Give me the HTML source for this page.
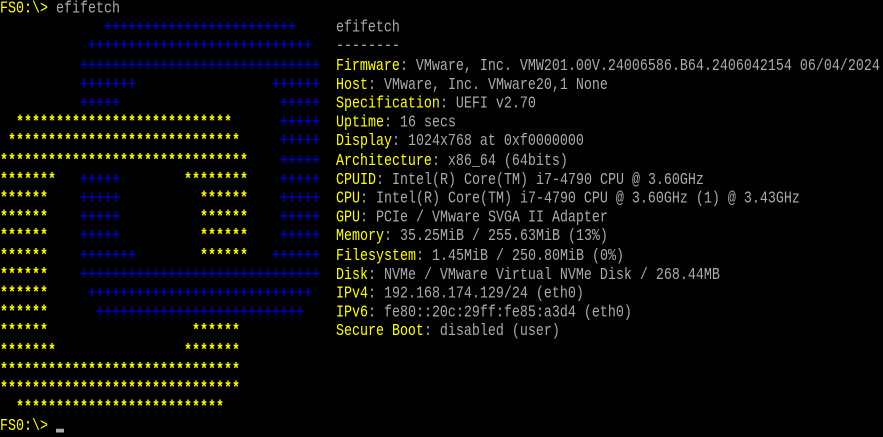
<!DOCTYPE html>
<html><head><meta charset="utf-8"><style>
html,body{margin:0;padding:0;background:#000;width:883px;height:437px;overflow:hidden}
pre{margin:0;font-family:"Liberation Mono",monospace;font-size:13.333px;line-height:15.2px;color:#aaa;transform:scaleY(1.25);transform-origin:0 0;white-space:pre}
.y{color:#ffff00}.b{color:#0000b0;font-weight:bold}
.a{font-weight:bold}
.cur{display:inline-block;width:8px;height:3px;background:#aaa;vertical-align:-2px}
</style></head><body><pre><span class="y">FS0:\&gt;</span> efifetch
             <span class="b">++++++++++++++++++++++++</span>     efifetch
           <span class="b">++++++++++++++++++++++++++++</span>   --------
          <span class="b">++++++++++++++++++++++++++++++</span>  <span class="y">Firmware</span>: VMware, Inc. VMW201.00V.24006586.B64.2406042154 06/04/2024
          <span class="b">+++++++</span>                 <span class="b">++++++</span>  <span class="y">Host</span>: VMware, Inc. VMware20,1 None
          <span class="b">+++++</span>                    <span class="b">+++++</span>  <span class="y">Specification</span>: UEFI v2.70
  <span class="y a">***************************</span>      <span class="b">+++++</span>  <span class="y">Uptime</span>: 16 secs
 <span class="y a">*****************************</span>     <span class="b">+++++</span>  <span class="y">Display</span>: 1024x768 at 0xf0000000
<span class="y a">*******************************</span>    <span class="b">+++++</span>  <span class="y">Architecture</span>: x86_64 (64bits)
<span class="y a">*******</span>   <span class="b">+++++</span>        <span class="y a">********</span>    <span class="b">+++++</span>  <span class="y">CPUID</span>: Intel(R) Core(TM) i7-4790 CPU @ 3.60GHz
<span class="y a">******</span>    <span class="b">+++++</span>          <span class="y a">******</span>    <span class="b">+++++</span>  <span class="y">CPU</span>: Intel(R) Core(TM) i7-4790 CPU @ 3.60GHz (1) @ 3.43GHz
<span class="y a">******</span>    <span class="b">+++++</span>          <span class="y a">******</span>    <span class="b">+++++</span>  <span class="y">GPU</span>: PCIe / VMware SVGA II Adapter
<span class="y a">******</span>    <span class="b">+++++</span>          <span class="y a">******</span>    <span class="b">+++++</span>  <span class="y">Memory</span>: 35.25MiB / 255.63MiB (13%)
<span class="y a">******</span>    <span class="b">+++++++</span>        <span class="y a">******</span>   <span class="b">++++++</span>  <span class="y">Filesystem</span>: 1.45MiB / 250.80MiB (0%)
<span class="y a">******</span>    <span class="b">++++++++++++++++++++++++++++++</span>  <span class="y">Disk</span>: NVMe / VMware Virtual NVMe Disk / 268.44MB
<span class="y a">******</span>     <span class="b">++++++++++++++++++++++++++++</span>   <span class="y">IPv4</span>: 192.168.174.129/24 (eth0)
<span class="y a">******</span>      <span class="b">++++++++++++++++++++++++++</span>    <span class="y">IPv6</span>: fe80::20c:29ff:fe85:a3d4 (eth0)
<span class="y a">******</span>                  <span class="y a">******</span>            <span class="y">Secure Boot</span>: disabled (user)
<span class="y a">*******</span>                <span class="y a">*******</span>
<span class="y a">******************************</span>
<span class="y a">******************************</span>
  <span class="y a">**************************</span>
<span class="y">FS0:\&gt;</span> <span class="cur"></span></pre></body></html>
